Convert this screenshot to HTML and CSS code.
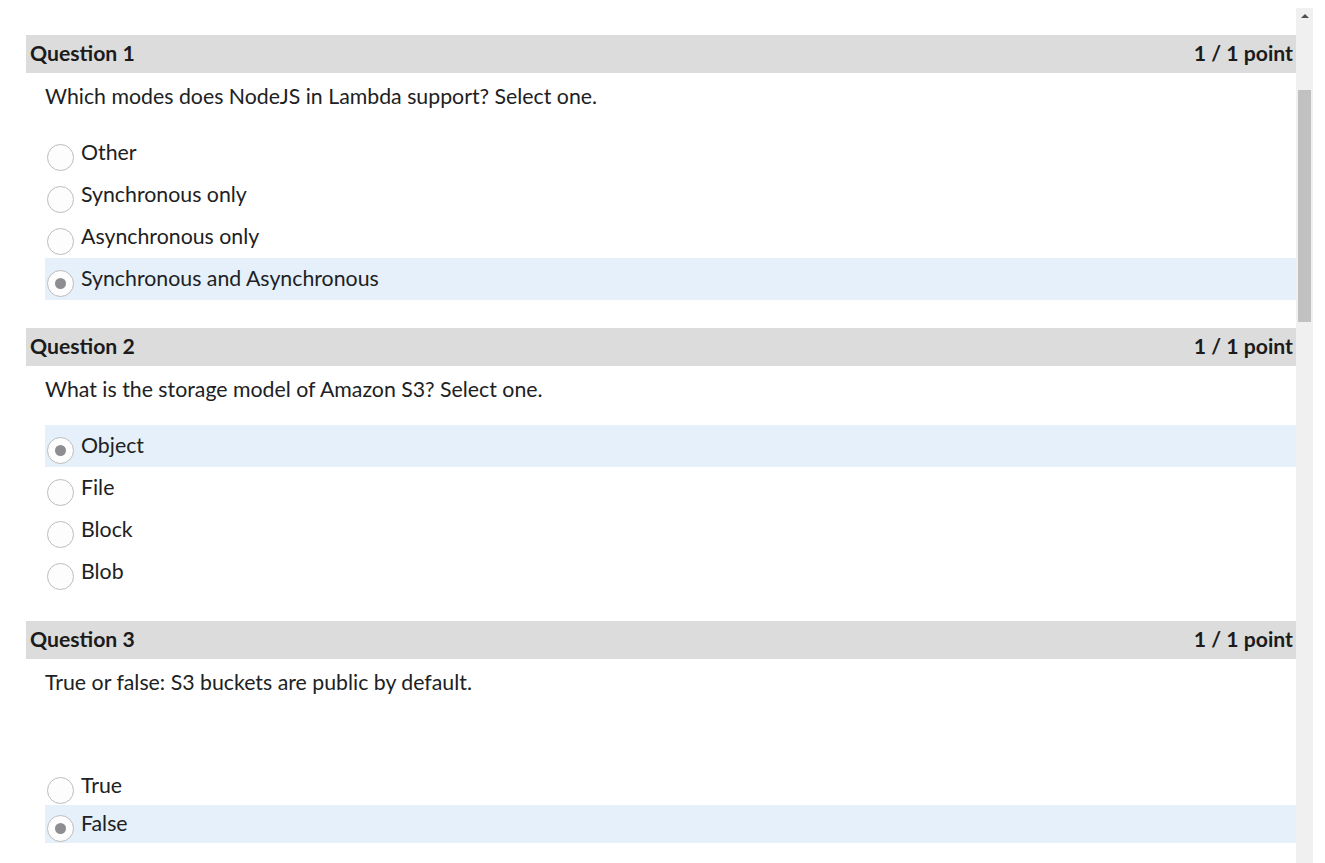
FILE: index.html
```html
<!DOCTYPE html>
<html lang="en">
<head>
<meta charset="utf-8">
<title>Quiz</title>
<link rel="stylesheet" href="styles.css">
</head>
<body>
<div class="page">
  <main class="content">
    <section class="question">
      <div class="q-head"><span>Question 1</span><span>1 / 1 point</span></div>
      <p class="q-text">Which modes does NodeJS in Lambda support? Select one.</p>
      <ul class="options">
        <li class="option"><span class="radio"></span><span>Other</span></li>
        <li class="option"><span class="radio"></span><span>Synchronous only</span></li>
        <li class="option"><span class="radio"></span><span>Asynchronous only</span></li>
        <li class="option selected"><span class="radio"></span><span>Synchronous and Asynchronous</span></li>
      </ul>
    </section>
    <section class="question">
      <div class="q-head"><span>Question 2</span><span>1 / 1 point</span></div>
      <p class="q-text">What is the storage model of Amazon S3? Select one.</p>
      <ul class="options">
        <li class="option selected"><span class="radio"></span><span>Object</span></li>
        <li class="option"><span class="radio"></span><span>File</span></li>
        <li class="option"><span class="radio"></span><span>Block</span></li>
        <li class="option"><span class="radio"></span><span>Blob</span></li>
      </ul>
    </section>
    <section class="question">
      <div class="q-head"><span>Question 3</span><span>1 / 1 point</span></div>
      <p class="q-text tall">True or false: S3 buckets are public by default.</p>
      <ul class="options compact">
        <li class="option"><span class="radio"></span><span>True</span></li>
        <li class="option selected"><span class="radio"></span><span>False</span></li>
      </ul>
    </section>
  </main>
  <div class="scrollbar">
    <div class="sb-arrow"></div>
    <div class="sb-thumb"></div>
  </div>
</div>
</body>
</html>
```

FILE: styles.css
```css
html, body {
  margin: 0;
  padding: 0;
  height: 100%;
  overflow: hidden;
  background: #ffffff;
}
body {
  font-family: Lato, "Liberation Sans", sans-serif;
  color: #202122;
}
.page {
  display: flex;
  height: 100vh;
}
.content {
  flex: 1;
  padding: 35px 0 0 26px;
  min-width: 0;
}
.question {
  margin-bottom: 28px;
}
.q-head {
  height: 38px;
  background: #dcdcdc;
  display: flex;
  justify-content: space-between;
  align-items: center;
  padding: 0 3px 0 4px;
  font-size: 21.2px;
  line-height: 24px;
  font-weight: 700;
  color: #1b1b1b;
}
.q-head span {
  margin-top: -2px;
}
.q-text {
  margin: 0;
  padding: 11px 0 24px 19px;
  font-size: 21.3px;
  line-height: 24px;
}
.q-text.tall {
  padding-bottom: 73px;
}
.options {
  list-style: none;
  margin: 0 0 0 19px;
  padding: 0;
}
.option {
  height: 42px;
  display: flex;
  align-items: center;
  gap: 7px;
  padding-left: 2px;
  font-size: 21.3px;
}
.option span:last-child {
  margin-top: -2px;
}
.compact .option {
  height: 38px;
}
.option.selected {
  background: #e5f0fa;
}
.radio {
  width: 25px;
  height: 25px;
  border: 1px solid #bcbcbc;
  border-radius: 50%;
  background: #fdfdfd;
  margin-top: 8px;
  flex: none;
  display: flex;
  align-items: center;
  justify-content: center;
}
.option.selected .radio::after {
  content: "";
  width: 11px;
  height: 11px;
  border-radius: 50%;
  background: #8e8e92;
}
.scrollbar {
  width: 17px;
  margin: 8px 12px 0 0;
  background: #f0f0f0;
  position: relative;
}
.sb-arrow {
  position: absolute;
  left: 5px;
  top: 6px;
  width: 0;
  height: 0;
  border-left: 4px solid transparent;
  border-right: 4px solid transparent;
  border-bottom: 4px solid #505050;
}
.sb-thumb {
  position: absolute;
  left: 2px;
  right: 2px;
  top: 82px;
  height: 232px;
  background: #c1c1c1;
}
```
